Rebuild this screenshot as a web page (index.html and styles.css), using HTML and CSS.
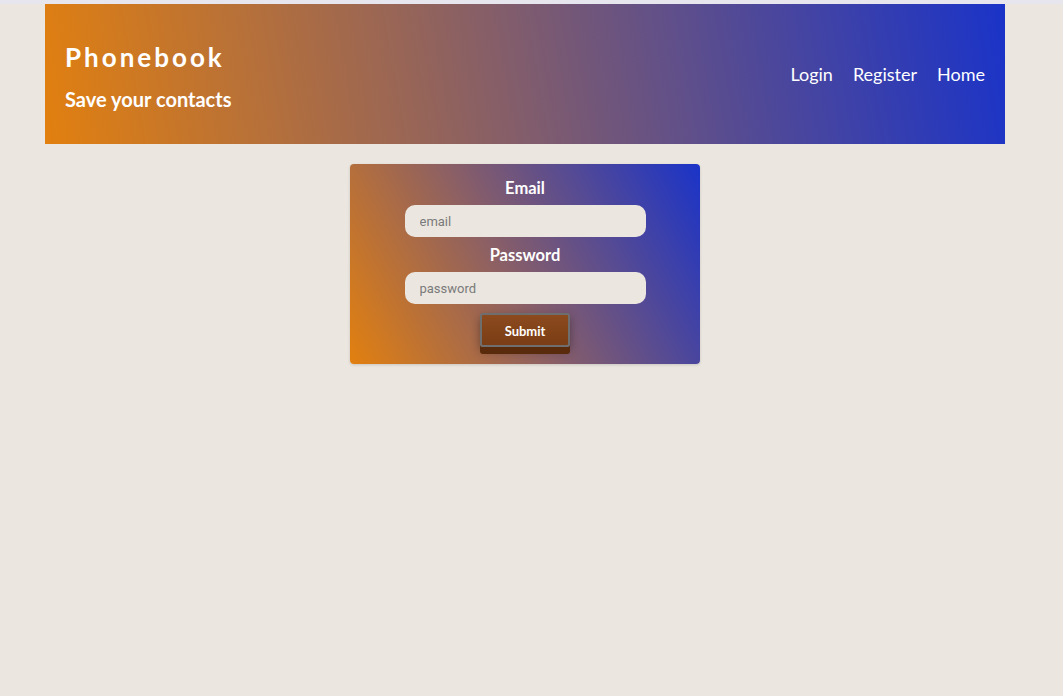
FILE: index.html
```html
<!DOCTYPE html>
<html lang="en">
<head>
<meta charset="utf-8">
<title>Phonebook</title>
<link rel="stylesheet" href="styles.css">
</head>
<body>
<div class="page">
  <header class="header">
    <div class="brand">
      <h1 class="title">Phonebook</h1>
      <p class="subtitle">Save your contacts</p>
    </div>
    <nav class="nav">
      <a class="nav-link" href="#">Login</a>
      <a class="nav-link" href="#">Register</a>
      <a class="nav-link" href="#">Home</a>
    </nav>
  </header>
  <main class="main">
    <form class="card">
      <label class="label" for="email">Email</label>
      <input class="input" id="email" type="email" placeholder="email">
      <label class="label" for="password">Password</label>
      <input class="input" id="password" type="password" placeholder="password">
      <button class="submit" type="button">Submit</button>
    </form>
  </main>
</div>
</body>
</html>
```
FILE: styles.css
```css
html, body {
  margin: 0;
  padding: 0;
}
body {
  background: #ebe6df;
  border-top: 4px solid #e7e6ee;
  font-family: Lato, "Noto Sans", sans-serif;
  min-height: 692px;
}
.page {
  width: 960px;
  margin-left: 45px;
}
.header {
  height: 140px;
  box-sizing: border-box;
  padding: 0 20px;
  display: flex;
  align-items: center;
  justify-content: space-between;
  background: linear-gradient(80deg, #e2800f 0%, #8a6064 45%, #1a33c8 100%);
  color: #fff;
}
.brand {
  display: flex;
  flex-direction: column;
  margin-top: 4px;
}
.title {
  margin: 0;
  font-size: 26px;
  font-weight: 700;
  letter-spacing: 3px;
  line-height: 32px;
}
.subtitle {
  margin: 14px 0 0;
  font-size: 20px;
  font-weight: 700;
  line-height: 24px;
}
.nav {
  display: flex;
  gap: 20px;
}
.nav-link {
  color: #fff;
  text-decoration: none;
  font-size: 18px;
}
.main {
  display: flex;
  justify-content: center;
  padding-top: 20px;
}
.card {
  width: 350px;
  height: 200px;
  box-sizing: border-box;
  border-radius: 4px;
  background: linear-gradient(62deg, #e2800f 0%, #8a5f66 45%, #1a33c8 100%);
  box-shadow: 0 1px 3px rgba(0,0,0,0.15);
  display: flex;
  flex-direction: column;
  align-items: center;
  padding-top: 14px;
}
.label {
  color: #fff;
  font-weight: 700;
  font-size: 16.5px;
  line-height: 20px;
}
.input {
  margin-top: 7px;
  margin-bottom: 8px;
  width: 241px;
  height: 32px;
  box-sizing: border-box;
  border: none;
  border-radius: 10px;
  background: #ebe6df;
  padding: 0 15px;
  font-family: Roboto, Arial, sans-serif;
  font-size: 13px;
  color: #333;
  outline: none;
}
.input::placeholder {
  color: #7a7a7a;
}
.submit {
  margin-top: 1px;
  width: 90px;
  height: 34px;
  padding-top: 2px;
  border: 2px solid #6e6e6e;
  border-radius: 3px;
  background: linear-gradient(180deg, #8c4a1e 0%, #7a3d15 100%);
  color: #fff;
  font-family: Lato, "Noto Sans", sans-serif;
  font-weight: 700;
  font-size: 13px;
  box-shadow: 0 7px 0 #5a2a0c, 0 4px 10px rgba(0,0,0,0.35);
}
```
